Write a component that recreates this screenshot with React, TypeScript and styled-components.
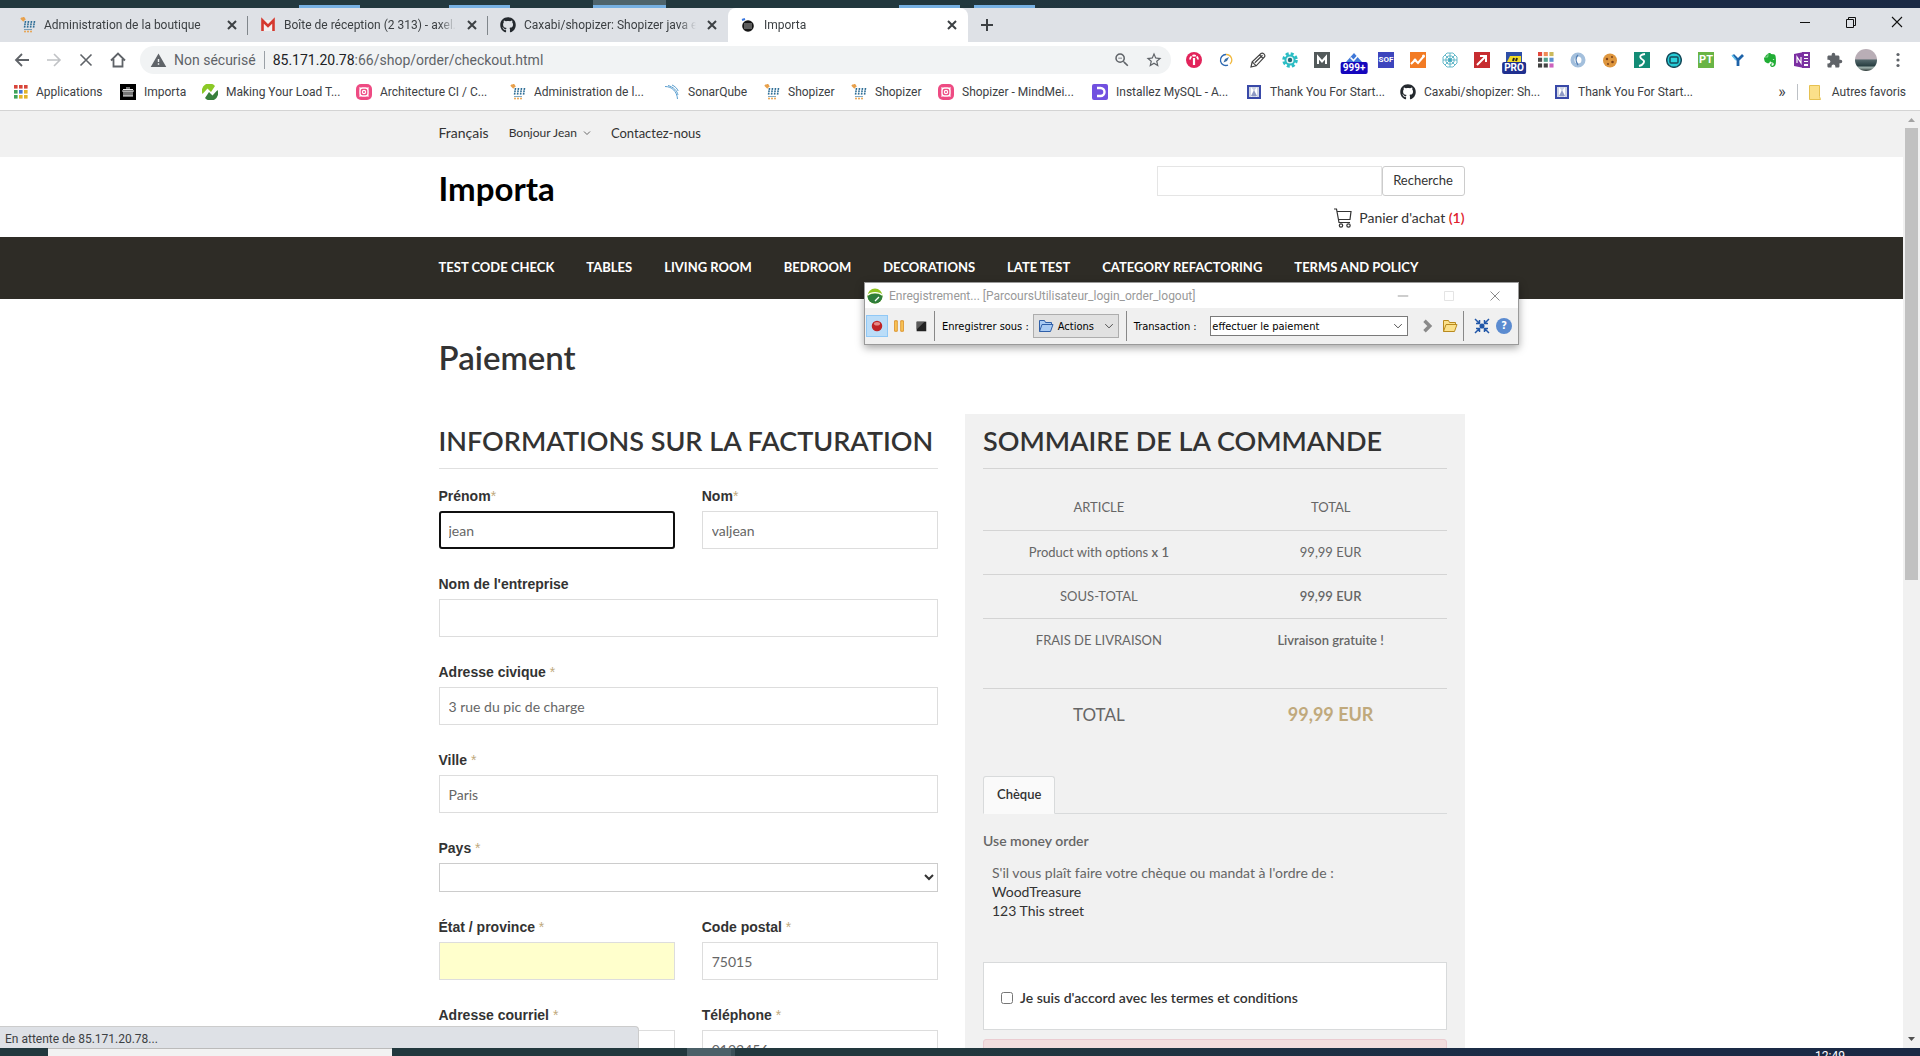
import React, { ReactNode } from 'react';
import styled, { createGlobalStyle, css } from 'styled-components';
import { FaGithub, FaEvernote } from 'react-icons/fa';
import { MdExtension, MdOutlineZoomOut, MdStarBorder, MdWarning } from 'react-icons/md';

const ui = 'Roboto, "Open Sans", sans-serif';
const lato = 'Lato, "Open Sans", sans-serif';

const GlobalStyle = createGlobalStyle`
  *, *::before, *::after { box-sizing: border-box; }
  body { margin: 0; background: #fff; }
  button, input, select { margin: 0; font: inherit; color: inherit; }
  button { padding: 0; border: 0; background: none; }
  a { color: inherit; text-decoration: none; }
  svg { display: block; flex: none; }
`;

const Screen = styled.div`
  display: flex;
  flex-direction: column;
  height: 100vh;
  overflow: hidden;
  font-family: ${ui};
  font-size: 12px;
  color: #3c4043;
`;

const Desktop = styled.div`
  display: flex;
  flex: none;
  height: 8px;
  overflow: hidden;
  background: linear-gradient(90deg, #22383e 0%, #22383e 50%, #1a2b47 80%, #1a2944 100%);
`;

const Task = styled.span<{ $space: number; $width: number; $lit?: boolean }>`
  flex: none;
  width: ${p => p.$width}px;
  margin-left: ${p => p.$space}px;
  border-bottom: 3px solid #76b0e2;
  background: ${p => (p.$lit ? '#4e646c' : 'transparent')};
`;

const TaskSearch = styled.span`
  width: 344px;
  margin-left: 48px;
  background: #f2f2f2;
  border-top: 1px solid #bbb;
`;

const TaskActive = styled.span`
  width: 48px;
  margin-left: 295px;
  background: #4b6068;
  border-right: 4px solid #3a5058;
`;

const Clock = styled.time`
  margin-left: auto;
  padding-right: 75px;
  font-size: 12px;
  line-height: 16px;
  color: #fff;
`;

/* Browser chrome */
const TabBar = styled.div`
  display: flex;
  flex: none;
  height: 34px;
  padding-left: 8px;
  background: #dee1e6;
`;

const Tab = styled.div<{ $active?: boolean; $line?: boolean }>`
  display: flex;
  align-items: center;
  gap: 8px;
  width: 240px;
  padding: 0 8px 0 12px;
  position: relative;
  border-radius: 8px 8px 0 0;
  background: ${p => (p.$active ? '#fff' : 'transparent')};
  ${p => p.$line && css`
    &::after {
      content: '';
      position: absolute;
      right: 0;
      top: 8px;
      height: 19px;
      border-right: 1px solid #80868b;
    }
  `}
`;

const TabTitle = styled.span`
  flex: 1;
  min-width: 0;
  overflow: hidden;
  white-space: nowrap;
  line-height: 20px;
  mask-image: linear-gradient(90deg, #000 90%, transparent);
`;

const IconButton = styled.button<{ $size?: number }>`
  display: grid;
  place-items: center;
  flex: none;
  width: ${p => p.$size ?? 16}px;
  height: ${p => p.$size ?? 16}px;
`;

const NewTab = styled(IconButton)`
  align-self: center;
  margin-left: 11px;
`;

const WindowButtons = styled.div`
  display: flex;
  gap: 30px;
  margin: 6px 15px 0 auto;
`;

const Toolbar = styled.div`
  display: flex;
  align-items: center;
  flex: none;
  height: 36px;
  padding: 0 14px;
  background: #fff;
`;

const NavButtons = styled.div`
  display: flex;
  gap: 16px;
  margin-right: 14px;
`;

const Omnibox = styled.div`
  display: flex;
  align-items: center;
  flex: 1;
  height: 28px;
  padding: 0 8px 0 10px;
  border-radius: 14px;
  background: #f1f3f4;
  font-size: 14px;
  color: #5f6368;
`;

const Security = styled.span`
  margin: 0 8px 0 7px;
  padding-right: 8px;
  border-right: 1px solid #9aa0a6;
  line-height: 18px;
`;

const Url = styled.span`
  flex: 1;
  b { font-weight: 400; color: #202124; }
`;

const OmniIcons = styled.div`
  display: flex;
  gap: 14px;
`;

const Extensions = styled.div`
  display: flex;
  align-items: center;
  gap: 16px;
  margin-left: 15px;
`;

const ExtButton = styled(IconButton)`
  position: relative;
`;

const Badge = styled.span<{ $bg: string }>`
  position: absolute;
  top: 10px;
  left: 50%;
  padding: 0 2px;
  border-radius: 2px;
  transform: translateX(-50%);
  background: ${p => p.$bg};
  color: #fff;
  font-size: 10px;
  font-weight: 700;
  line-height: 12px;
`;

const Glyph = styled.span<{ $bg: string; $fg?: string; $round?: boolean; $size?: number }>`
  display: grid;
  place-items: center;
  flex: none;
  width: 16px;
  height: 16px;
  border-radius: ${p => (p.$round ? 8 : 0)}px;
  background: ${p => p.$bg};
  color: ${p => p.$fg ?? '#fff'};
  font-size: ${p => p.$size ?? 9}px;
  font-weight: 700;
  line-height: 16px;
`;

const Avatar = styled.span`
  width: 22px;
  height: 22px;
  margin: 0 -3px;
  border-radius: 50%;
  background: linear-gradient(180deg, #b9aeb6 0 45%, #53676b 50%, #2b4144 75%, #9fb1ad 85%, #273331);
`;

const Bookmarks = styled.nav`
  display: flex;
  align-items: center;
  gap: 16px;
  flex: none;
  height: 33px;
  padding: 0 14px 4px;
  border-bottom: 1px solid #d4d4d4;
  background: #fff;
`;

const Bookmark = styled.a<{ $width: number }>`
  display: flex;
  align-items: center;
  gap: 8px;
  flex: none;
  width: ${p => p.$width}px;
  line-height: 16px;
  white-space: nowrap;
`;

const MoreBookmarks = styled.div`
  display: flex;
  align-items: center;
  gap: 11px;
  margin-left: auto;
  span:first-child { font-size: 16px; line-height: 16px; }
`;

const Divider = styled.span`
  width: 1px;
  height: 16px;
  background: #bdc1c6;
`;

/* Page */
const Viewport = styled.div`
  display: flex;
  flex: 1;
  min-height: 0;
  position: relative;
  overflow: hidden;
`;

const Page = styled.div`
  flex: 1;
  min-width: 0;
  overflow: hidden;
  background: #fff;
  font-family: ${lato};
  font-size: 14px;
  color: #333;
`;

const Scrollbar = styled.div`
  display: flex;
  flex-direction: column;
  align-items: center;
  flex: none;
  width: 17px;
  padding: 7px 2px;
  background: #f1f1f1;
`;

const Thumb = styled.div`
  flex: none;
  width: 100%;
  height: 49%;
  margin: 6px 0 auto;
  background: #c1c1c1;
`;

const Container = styled.div`
  width: 100%;
  max-width: 1026px;
  margin: 0 auto;
`;

const TopBar = styled.div`
  background: #f1f1f1;
`;

const TopLinks = styled(Container)`
  display: flex;
  align-items: center;
  gap: 20px;
  height: 46px;
  padding-bottom: 3px;
  font-size: 13px;
  a { display: flex; align-items: center; gap: 6px; }
  a:first-child { font-size: 14px; }
`;

const Small = styled.a`
  font-size: 12px;
`;

const Header = styled(Container)`
  display: flex;
  justify-content: space-between;
  height: 80px;
`;

const Logo = styled.a`
  padding-top: 11px;
  font-size: 33px;
  font-weight: 700;
  line-height: 40px;
  color: #000;
`;

const HeaderRight = styled.div`
  display: flex;
  flex-direction: column;
  align-items: flex-end;
  gap: 12px;
  padding-top: 9px;
`;

const Search = styled.form`
  display: flex;
  height: 30px;
`;

const SearchInput = styled.input`
  width: 225px;
  border: 1px solid #e5e5e5;
`;

const SearchButton = styled.button`
  width: 83px;
  padding-bottom: 2px;
  border: 1px solid #ccc;
  border-radius: 3px;
  background: #fff;
  font-size: 13px;
`;

const Cart = styled.a`
  display: flex;
  align-items: center;
  gap: 7px;
  font-size: 14px;
  line-height: 20px;
  b { font-weight: 600; color: #e0202a; }
`;

const MainNav = styled.nav`
  background: #2e2c26;
`;

const NavLinks = styled(Container)`
  display: flex;
  align-items: center;
  gap: 32px;
  height: 62px;
  padding-bottom: 2px;
  color: #fff;
  font-size: 13px;
  font-weight: 700;
  white-space: nowrap;
`;

const PageTitle = styled.h1`
  margin: 0;
  padding: 37px 0 36px;
  font-size: 33px;
  font-weight: 600;
  line-height: 42px;
`;

const Columns = styled.div`
  display: grid;
  grid-template-columns: 1fr 1fr;
  gap: 27px;
`;

const Billing = styled.form`
  display: grid;
  grid-template-columns: 1fr 1fr;
  column-gap: 27px;
  row-gap: 27px;
  align-content: start;
`;

const SectionTitle = styled.h2`
  grid-column: 1 / -1;
  margin: 0;
  padding: 11px 0;
  border-bottom: 1px solid #e0e0e0;
  font-size: 27px;
  font-weight: 600;
  line-height: 32px;
  white-space: nowrap;
`;

const BillingTitle = styled(SectionTitle)`
  margin-bottom: -8px;
`;

const FieldBox = styled.label<{ $wide?: boolean }>`
  display: flex;
  flex-direction: column;
  gap: 6px;
  grid-column: ${p => (p.$wide ? '1 / -1' : 'auto')};
  font-family: "Liberation Sans", Arial, sans-serif;
  font-size: 14px;
  font-weight: 700;
  line-height: 17px;
  i { font-style: normal; font-weight: 400; color: #c0a97c; }
`;

const TextInput = styled.input<{ $bg?: string }>`
  width: 100%;
  height: 38px;
  padding: 0 9px;
  border: 1px solid #ddd;
  outline: 0;
  background: ${p => p.$bg ?? '#fff'};
  font-family: ${lato};
  font-size: 14px;
  font-weight: 400;
  color: #666;
`;

const FocusedInput = styled(TextInput)`
  border: 2px solid #101010;
  border-radius: 3px;
  padding: 0 8px;
`;

const Country = styled.select`
  width: 100%;
  height: 29px;
  border: 1px solid #ccc;
  background: #fff;
`;

const Summary = styled.section`
  display: flow-root;
  padding: 0 18px 60px;
  background: #f1f1f1;
`;

const SummaryTitle = styled(SectionTitle)`
  border-color: #d4d4d4;
`;

const OrderTable = styled.table`
  width: 100%;
  margin-top: 15px;
  border-collapse: collapse;
  table-layout: fixed;
  font-size: 13px;
  color: #666;
  text-align: center;
  th, td { padding: 0; font-weight: 400; }
  b { font-weight: 600; }
  tr { height: 44px; }
  tr + tr, tbody tr, tfoot tr { border-top: 1px solid #d4d4d4; }
  thead tr { height: 46px; }
  tbody tr:last-child { height: 70px; }
  tbody tr:last-child td, tbody tr:last-child th { padding-bottom: 26px; }
  tfoot tr { height: 52px; font-size: 17px; }
  tfoot td { font-size: 18px; font-weight: 700; color: #c0a97c; }
`;

const PayTabs = styled.div`
  display: flex;
  margin-top: 36px;
  border-bottom: 1px solid #d8dadb;
`;

const PayTab = styled.button`
  height: 38px;
  margin-bottom: -1px;
  padding: 0 13px 2px;
  border: 1px solid #d8dadb;
  border-bottom-color: #fafafa;
  border-radius: 3px 3px 0 0;
  background: #fafafa;
  font-size: 13px;
  font-weight: 600;
  color: #333;
`;

const PayTitle = styled.h3`
  margin: 17px 0 12px;
  font-size: 14px;
  font-weight: 600;
  line-height: 20px;
  color: #666;
`;

const PayText = styled.p`
  margin: 0 0 42px;
  padding-left: 9px;
  line-height: 19px;
  color: #333;
  span { color: #666; }
`;

const Agreement = styled.label`
  display: flex;
  align-items: center;
  gap: 7px;
  height: 68px;
  margin-bottom: 9px;
  padding: 3px 17px 0;
  border: 1px solid #d8dadb;
  background: #fff;
  font-weight: 600;
  input { width: 12px; height: 12px; }
`;

const Alert = styled.div`
  height: 45px;
  border: 1px solid #ebccd1;
  border-radius: 3px;
  background: #f2dede;
`;

const Status = styled.div`
  position: absolute;
  left: 0;
  bottom: 0;
  width: 639px;
  padding: 3px 5px 0;
  border-top: 1px solid #ccc;
  border-right: 1px solid #ccc;
  border-radius: 0 4px 0 0;
  background: #dee1e6;
  line-height: 18px;
`;

/* Floating recorder window */
const Recorder = styled.section`
  position: absolute;
  top: 171px;
  left: 864px;
  width: 655px;
  border: 1px solid #9a9a9a;
  background: #f0f0f0;
  box-shadow: 0 3px 8px rgba(0, 0, 0, 0.35);
  font-size: 11px;
  color: #000;
`;

const RecorderTitle = styled.header`
  display: flex;
  align-items: center;
  gap: 6px;
  height: 25px;
  padding: 0 17px 0 2px;
  background: #fff;
  font-size: 12px;
  color: #999;
`;

const RecorderButtons = styled.div`
  display: flex;
  gap: 34px;
  margin-left: auto;
`;

const RecorderBar = styled.div`
  display: flex;
  align-items: center;
  height: 36px;
  padding: 0 3px 0 1px;
  font-family: "DejaVu Sans Condensed", "DejaVu Sans", sans-serif;
  font-size: 11px;
  white-space: nowrap;
`;

const RecButton = styled(IconButton)<{ $on?: boolean }>`
  width: 22px;
  height: 22px;
  border: 1px solid ${p => (p.$on ? '#90c8f6' : 'transparent')};
  background: ${p => (p.$on ? '#bbddf8' : 'transparent')};
`;

const RecLine = styled.span`
  width: 1px;
  height: 30px;
  margin: 0 7px 0 2px;
  background: #888;
`;

const RecLabel = styled.label`
  display: flex;
  align-items: center;
  gap: 4px;
  margin-right: 5px;
`;

const ActionsMenu = styled.button`
  display: flex;
  align-items: center;
  gap: 4px;
  width: 86px;
  height: 24px;
  padding: 0 4px;
  border: 1px solid #adadad;
  background: #e1e1e1;
  svg:last-child { margin-left: auto; }
`;

const Combo = styled.span`
  display: grid;
  align-items: center;
  width: 198px;
  margin: 0 auto;
  select {
    grid-area: 1 / 1;
    height: 20px;
    padding: 0 1px;
    border: 1px solid #7a7a7a;
    background: #fff;
    appearance: none;
  }
  svg { grid-area: 1 / 1; justify-self: end; margin-right: 5px; pointer-events: none; }
`;

/* Icons */
const Svg = ({ s = 16, c = 'none', w = 2, children }: { s?: number; c?: string; w?: number; children: ReactNode }) => (
  <svg width={s} height={s} viewBox="0 0 16 16" fill="none" stroke={c} strokeWidth={w}>{children}</svg>
);
const Close = ({ c = '#3c4043', w = 2, s = 16 }) => <Svg c={c} w={w} s={s}><path d="M4 4l8 8M12 4l-8 8" /></Svg>;
const Chevron = ({ c = '#444', s = 10, w = 2 }) => <Svg c={c} w={w} s={s}><path d="M2 5l6 6 6-6" /></Svg>;

const ShopizerIcon = () => (
  <Svg>
    <path d="M1 1l3 3M3 0l2 3" stroke="#e8a14c" />
    <path d="M5.500 4l-1 7M8.500 4l-1 7M11.500 4l-1 7M14.500 4l-1 7" stroke="#2f6f97" strokeWidth="1.600" strokeDasharray="1.800 .7" />
    <path d="M4 12.500h8" stroke="#2f6f97" strokeWidth=".6" />
    <circle cx="5" cy="14.500" r="1" fill="#e8a14c" /><circle cx="8" cy="14.500" r="1" fill="#e8a14c" /><circle cx="11" cy="14.500" r="1" fill="#e8a14c" />
  </Svg>
);
const GmailIcon = () => (
  <Svg><path d="M2 3h12v11H2z" fill="#f3f0f0" /><path d="M2.500 14V3.500L8 9l5.500-5.500V14" stroke="#d5392e" strokeWidth="2.600" /></Svg>
);
const ImportaTabIcon = () => (
  <Svg><circle cx="8" cy="9" r="5.800" fill="#151515" /><path d="M4 7h8M4 9h8M4 11h8" stroke="#c9c9c9" strokeWidth=".8" /><path d="M2 3l3-1" stroke="#3977e0" strokeWidth="2" /></Svg>
);
const ImportaIcon = () => (
  <Svg><path d="M0 0h16v16H0z" fill="#000" /><path d="M3 5.500h10M2 7h12M3 12h10M4 7v5M6 7v5M8 7v5M10 7v5M12 7v5M6 4h4" stroke="#eee" strokeWidth="1" /></Svg>
);
const AppsGrid = ({ size = 14, colors }: { size?: number; colors: string[] }) => (
  <svg width={size} height={size} viewBox="0 0 14 14">
    {colors.map((c, i) => <rect key={i} x={(i % 3) * 5} y={Math.floor(i / 3) * 5} width="3.600" height="3.600" fill={c} />)}
  </svg>
);
const NeoloadIcon = () => (
  <Svg><path d="M.5 10A7.500 7.500 0 0 1 13 2L9 8 5.500 4.500z" fill="#8bc926" /><path d="M15.500 6A7.500 7.500 0 0 1 3 14L7 8l3.500 3.500z" fill="#39803c" /></Svg>
);
const RecorderLogo = () => (
  <Svg><circle cx="8" cy="8" r="7.500" fill="#8fc31f" /><path d="M.5 8C4 4.500 12 4.500 15.500 8a7.500 7.500 0 0 1-15 0z" fill="#2f7d3b" /><path d="M.8 7C4 3.800 12 3.800 15.200 7M8 13l4-4" stroke="#fff" strokeWidth="1.300" /></Svg>
);
const MindIcon = () => (
  <Svg><rect width="16" height="16" rx="5" fill="#ee4b83" /><rect x="4" y="4" width="8" height="8" rx="2.500" stroke="#fff" strokeWidth="1.400" /><circle cx="8" cy="8" r="1.600" stroke="#fff" strokeWidth="1.200" /><path d="M3.500 3.500l1.500 1.500M12.500 3.500L11 5M3.500 12.500L5 11M12.500 12.500L11 11" stroke="#fff" strokeWidth="1.200" /></Svg>
);
const SonarIcon = () => (
  <Svg c="#5b9fd0" w={1}><path d="M1 2.500C8 2.500 13 7.500 13.500 15M4 1.500C9.500 3 13 6.500 14 11M8 1c3 1.300 5 3.300 6.200 6" /></Svg>
);
const MysqlIcon = () => (
  <Svg><rect width="16" height="16" rx="2" fill="#7150e0" /><path d="M5 4h3.500a4 4 0 0 1 0 8H5" stroke="#fff" strokeWidth="2.400" /></Svg>
);
const StartIcon = () => (
  <Svg><path d="M2 2h12v12H2z" fill="#cfd5e4" stroke="#3949a8" strokeWidth="2" /><path d="M5 3l3 4 3-4v10l-3-3-3 3z" fill="#fff" /><path d="M5 12l3-6 3 6z" fill="#8e99c4" /></Svg>
);
const Folder = ({ fill = '#fbe08a', line = '#e6c151' }) => (
  <svg width="12" height="16" viewBox="0 0 12 16"><path d="M.5 1.500h10v11l1 3H.5z" fill={fill} stroke={line} /></svg>
);
const OpenFolder = ({ c, l }: { c: string; l: string }) => (
  <Svg c={l} w={1}><path d="M1.500 13.500v-11h5l1 2h6v3" fill={c} /><path d="M1.500 13.500l2.500-7h11l-2.500 7z" fill={c} /></Svg>
);
const CartIcon = () => (
  <svg width="18" height="20" viewBox="0 0 18 20" fill="none" stroke="#333" strokeWidth="1.200">
    <path d="M0 1h2.500L5 14.500h11M3 3.500h14l-1 8H4.500" /><circle cx="7" cy="17.500" r="1.700" /><circle cx="14.500" cy="17.500" r="1.700" />
  </svg>
);

const extensions: { name: string; icon: ReactNode }[] = [
  { name: 'Toucan', icon: <Svg><circle cx="8" cy="8" r="8" fill="#e2245b" /><path d="M8 13V6" stroke="#fff" strokeWidth="2.200" /><path d="M4 7.500a4 4 0 0 1 8 0" stroke="#fff" strokeWidth="1.800" strokeDasharray="3.500 1" /></Svg> },
  { name: 'Compass', icon: <Svg><path d="M8 2.500a5.500 5.500 0 1 0 2 10.600" stroke="#2c68b1" strokeWidth="1.300" /><path d="M8 2.500a5.500 5.500 0 0 1 4 9.500" stroke="#f1b93e" strokeWidth="1.300" /><path d="M5.500 10.500L7 7l4-2-2 4z" fill="#3a6ea5" /></Svg> },
  { name: 'Crayon', icon: <Svg c="#444" w={1.2}><path d="M1 15l1.200-5.200L11 1.500c1.800-1.500 4.800 1.500 3.500 3.500L6.200 13.800zM2.200 9.800l4 4M4.800 10.800l7.700-7.600M9.500 2.800L13 6.500" /></Svg> },
  { name: 'React', icon: <Svg><circle cx="8" cy="8" r="6.300" stroke="#2bbdc4" strokeWidth="3" strokeDasharray="2.900 2.040" /><circle cx="8" cy="8" r="4.600" stroke="#2bbdc4" strokeWidth="2" fill="#e8f8f8" /><circle cx="8" cy="8" r="2.200" fill="#256a78" /></Svg> },
  { name: 'Mercury', icon: <Svg><path d="M0 0h16v16H0z" fill="#535a5b" /><path d="M4 12V5l4 4.500L12 5v7" stroke="#fff" strokeWidth="2" /></Svg> },
  { name: 'Tâches', icon: <><Svg><path d="M0 10l8-9 8 9z" fill="#3f78d8" /><path d="M4.500 5.500l3 3 5-5.500" stroke="#fff" strokeWidth="1.600" /></Svg><Badge $bg="#1506bd">999+</Badge></> },
  { name: 'SOF', icon: <Glyph $bg="#3d45bd" $size={8}>SOF</Glyph> },
  { name: 'Analytics', icon: <Svg><path d="M0 0h16v16H0z" fill="#f27b24" /><path d="M1 12l4-4 3 3 6-7" stroke="#fff" strokeWidth="2" /><circle cx="5" cy="8" r="1.500" fill="#fff" /><circle cx="13.500" cy="4" r="1.500" fill="#fff" /></Svg> },
  { name: 'Réseau', icon: <Svg c="#42a8bd" w={0.8}><path d="M5 1h6l4 4v6l-4 4H5l-4-4V5zM6 4h4l2 2v4l-2 2H6l-2-2V6zM1 8h14M8 1v14M3 3l10 10M13 3L3 13" /><circle cx="8" cy="8" r="1.500" fill="#42a8bd" /></Svg> },
  { name: 'Flèche', icon: <Svg><path d="M0 0h16v16H0z" fill="#c62c30" /><path d="M3 13l9-9M6 4h6v6" stroke="#fff" strokeWidth="2" /></Svg> },
  { name: 'Pro', icon: <><Svg><path d="M0 0h16v14H0z" fill="#2e4fa7" /><path d="M1 10l3-6h11v6z" fill="#f2dc25" /><path d="M7 9l1-3M10 9l1-3" stroke="#222" /></Svg><Badge $bg="#20308f">PRO</Badge></> },
  { name: 'Grille', icon: <AppsGrid size={16} colors={['#e2483d', '#f08a55', '#cbb95c', '#4d4d4d', '#53a08a', '#5d91cf', '#3f3f3f', '#444', '#cc62bd']} /> },
  { name: 'Anneau', icon: <Svg><circle cx="8" cy="8" r="5.500" stroke="#a3bfdc" strokeWidth="4" /><path d="M8 3c-3 3-2 7 0 10" stroke="#5682b6" strokeWidth="1.400" /></Svg> },
  { name: 'Cookie', icon: <Svg><circle cx="8" cy="8.500" r="7" fill="#de963e" /><g fill="#7d431a"><circle cx="5" cy="7" r="1.200" /><circle cx="10" cy="5" r="1" /><circle cx="10.500" cy="10" r="1.300" /><circle cx="6" cy="12" r="1" /></g></Svg> },
  { name: 'Stylus', icon: <Svg><path d="M0 0h16v16H0z" fill="#138c76" /><path d="M11 2C3 3 7 7 9 8s1 5-4 6" stroke="#fff" strokeWidth="1.800" /></Svg> },
  { name: 'Écran', icon: <Svg><circle cx="8" cy="8" r="7.300" fill="#26cbd5" stroke="#164b5b" strokeWidth="1.500" /><rect x="4" y="5" width="8" height="6" rx="1" fill="#2cd3dc" stroke="#164b5b" strokeWidth="1.500" /></Svg> },
  { name: 'PT', icon: <Glyph $bg="#69b445" $size={11}>PT</Glyph> },
  { name: 'Y', icon: <Svg><path d="M3 3l5 5 5-5M8 8v6" stroke="#1d62a8" strokeWidth="2.800" /><path d="M2 3l4 5" stroke="#67c5ef" strokeWidth="1.500" /></Svg> },
  { name: 'Evernote', icon: <FaEvernote size={16} color="#21ad35" /> },
  { name: 'OneNote', icon: <Svg><path d="M9 1h6v14H9z" fill="#fff" stroke="#7b36a0" /><path d="M10 5h5M10 8h5M10 11h5" stroke="#7b36a0" /><path d="M0 2l10-2v16L0 14z" fill="#7b2fa2" /><path d="M3 11V5l4 6V5" stroke="#fff" strokeWidth="1.200" /></Svg> },
  { name: 'Extensions', icon: <MdExtension size={17} color="#5f6368" /> },
];

const bookmarks: { label: string; width: number; icon: ReactNode }[] = [
  { label: 'Applications', width: 90, icon: <AppsGrid colors={['#d8453a', '#d8453a', '#d8453a', '#3fa35a', '#4775d1', '#e2b429', '#3fa35a', '#e2b429', '#e2b429']} /> },
  { label: 'Importa', width: 66, icon: <ImportaIcon /> },
  { label: 'Making Your Load T...', width: 138, icon: <NeoloadIcon /> },
  { label: 'Architecture CI / C...', width: 138, icon: <MindIcon /> },
  { label: 'Administration de l...', width: 138, icon: <ShopizerIcon /> },
  { label: 'SonarQube', width: 84, icon: <SonarIcon /> },
  { label: 'Shopizer', width: 71, icon: <ShopizerIcon /> },
  { label: 'Shopizer', width: 71, icon: <ShopizerIcon /> },
  { label: 'Shopizer - MindMei...', width: 138, icon: <MindIcon /> },
  { label: 'Installez MySQL - A...', width: 138, icon: <MysqlIcon /> },
  { label: 'Thank You For Start...', width: 138, icon: <StartIcon /> },
  { label: 'Caxabi/shopizer: Sh...', width: 138, icon: <FaGithub size={16} color="#24292e" /> },
  { label: 'Thank You For Start...', width: 138, icon: <StartIcon /> },
];

const tabs: { title: string; icon: ReactNode; active?: boolean; line?: boolean }[] = [
  { title: 'Administration de la boutique', icon: <ShopizerIcon />, line: true },
  { title: 'Boîte de réception (2 313) - axel.m', icon: <GmailIcon />, line: true },
  { title: 'Caxabi/shopizer: Shopizer java e-', icon: <FaGithub size={16} color="#24292e" /> },
  { title: 'Importa', icon: <ImportaTabIcon />, active: true },
];

const categories = ['TEST CODE CHECK', 'TABLES', 'LIVING ROOM', 'BEDROOM', 'DECORATIONS', 'LATE TEST', 'CATEGORY REFACTORING', 'TERMS AND POLICY'];

function Field({ label, required, wide, children }: { label: string; required?: string; wide?: boolean; children: ReactNode }) {
  return (
    <FieldBox $wide={wide}>
      <span>{label}{required && <i>{required}</i>}</span>
      {children}
    </FieldBox>
  );
}

function BrowserChrome() {
  return (
    <>
      <TabBar>
        {tabs.map(t => (
          <Tab key={t.title} $active={t.active} $line={t.line}>
            {t.icon}
            <TabTitle>{t.title}</TabTitle>
            <IconButton aria-label="Fermer l'onglet"><Close /></IconButton>
          </Tab>
        ))}
        <NewTab aria-label="Nouvel onglet"><Svg c="#3c4043"><path d="M8 2v12M2 8h12" /></Svg></NewTab>
        <WindowButtons>
          <IconButton aria-label="Réduire"><Svg c="#111" w={1}><path d="M3 8.500h10" /></Svg></IconButton>
          <IconButton aria-label="Restaurer"><Svg c="#111" w={1}><path d="M3.500 5.500h7v8h-7zM5.500 5V3.500h7v8H11" /></Svg></IconButton>
          <IconButton aria-label="Fermer"><Svg c="#111" w={1.1}><path d="M3 3l10 10M13 3L3 13" /></Svg></IconButton>
        </WindowButtons>
      </TabBar>
      <Toolbar>
        <NavButtons>
          <IconButton aria-label="Précédent"><Svg c="#5f6368" w={1.8}><path d="M15 8H2M8 2L2 8l6 6" /></Svg></IconButton>
          <IconButton aria-label="Suivant"><Svg c="#c0c2c5" w={1.6}><path d="M1 8h13M8 2l6 6-6 6" /></Svg></IconButton>
          <IconButton aria-label="Arrêter"><Svg c="#5f6368" w={1.6}><path d="M2.500 2.500l11 11M13.500 2.500l-11 11" /></Svg></IconButton>
          <IconButton aria-label="Accueil"><Svg c="#5f6368" w={1.8}><path d="M1 8.500L8 1.500l7 7M3.500 7v7.500h9V7" /></Svg></IconButton>
        </NavButtons>
        <Omnibox>
          <MdWarning size={17} color="#5f6368" />
          <Security>Non sécurisé</Security>
          <Url><b>85.171.20.78</b>:66/shop/order/checkout.html</Url>
          <OmniIcons>
            <IconButton $size={18} aria-label="Zoom"><MdOutlineZoomOut size={18} /></IconButton>
            <IconButton $size={18} aria-label="Favori"><MdStarBorder size={18} /></IconButton>
          </OmniIcons>
        </Omnibox>
        <Extensions>
          {extensions.map(e => <ExtButton key={e.name} aria-label={e.name}>{e.icon}</ExtButton>)}
          <Avatar />
          <IconButton aria-label="Menu"><Svg><g fill="#5f6368"><circle cx="8" cy="2.500" r="1.600" /><circle cx="8" cy="8" r="1.600" /><circle cx="8" cy="13.500" r="1.600" /></g></Svg></IconButton>
        </Extensions>
      </Toolbar>
      <Bookmarks>
        {bookmarks.map((b, i) => <Bookmark key={i} href="#" $width={b.width}>{b.icon}{b.label}</Bookmark>)}
        <MoreBookmarks>
          <span>»</span>
          <Divider />
          <Folder />
          <a href="#">Autres favoris</a>
        </MoreBookmarks>
      </Bookmarks>
    </>
  );
}

function RecorderWindow() {
  return (
    <Recorder>
      <RecorderTitle>
        <RecorderLogo />
        <span>Enregistrement... [ParcoursUtilisateur_login_order_logout]</span>
        <RecorderButtons>
          <IconButton $size={12} aria-label="Réduire"><Svg s={12} c="#999" w={1.3}><path d="M1 8h14" /></Svg></IconButton>
          <IconButton $size={12} aria-label="Agrandir"><Svg s={12} c="#e3e3e3" w={1.3}><path d="M2 2h12v12H2z" /></Svg></IconButton>
          <IconButton $size={12} aria-label="Fermer"><Svg s={12} c="#888" w={1.3}><path d="M2 2l12 12M14 2L2 14" /></Svg></IconButton>
        </RecorderButtons>
      </RecorderTitle>
      <RecorderBar>
        <RecButton $on aria-label="Enregistrer"><Svg s={14}><circle cx="8" cy="8" r="6" fill="#bf2426" /><ellipse cx="8" cy="5.500" rx="3.500" ry="2" fill="#e68b87" /></Svg></RecButton>
        <RecButton aria-label="Pause"><Svg s={14} c="#d98a1c" w={1}><path d="M3 2h3v12H3zM10 2h3v12h-3z" fill="#fbc95d" /></Svg></RecButton>
        <RecButton aria-label="Arrêter"><Svg s={14}><path d="M3 3h11v11H3z" fill="#222" /><path d="M3 3h9L3 12z" fill="#5b5b5b" /></Svg></RecButton>
        <RecLine />
        <RecLabel as="span">Enregistrer sous :
          <ActionsMenu><OpenFolder c="#a9cbf3" l="#2f5fa8" />Actions<Chevron s={10} w={1.5} /></ActionsMenu>
        </RecLabel>
        <RecLine />
        <RecLabel htmlFor="transaction">Transaction :</RecLabel>
        <Combo>
          <select id="transaction"><option>effectuer le paiement</option></select>
          <Chevron s={10} w={1.5} />
        </Combo>
        <RecButton aria-label="Suivant"><Svg s={14} c="#8a8a8a" w={4}><path d="M4 2l6 6-6 6" /></Svg></RecButton>
        <RecButton aria-label="Ouvrir"><OpenFolder c="#fbe18b" l="#b98a1e" /></RecButton>
        <RecLine />
        <RecButton aria-label="Compacter"><Svg c="#2257a8" w={1.5}><path d="M1 1l4 4M15 1l-4 4M1 15l4-4M15 15l-4-4M2 5.500h3.500V2M14 5.500h-3.500V2M2 10.500h3.500V14M14 10.500h-3.500V14" /><circle cx="8" cy="8" r="1.800" fill="#2257a8" /></Svg></RecButton>
        <RecButton aria-label="Aide"><Glyph $bg="#5b8bd0" $round $size={11}>?</Glyph></RecButton>
      </RecorderBar>
    </Recorder>
  );
}

export default function App() {
  return (
    <Screen>
      <GlobalStyle />
      <Desktop>
        <Task $space={299} $width={61} />
        <Task $space={89} $width={61} />
        <Task $space={83} $width={73} $lit />
        <Task $space={233} $width={61} />
        <Task $space={14} $width={61} />
      </Desktop>
      <BrowserChrome />
      <Viewport>
        <Page>
          <TopBar>
            <TopLinks>
              <a href="#">Français</a>
              <Small href="#">Bonjour Jean <Chevron s={8} w={1.6} /></Small>
              <a href="#">Contactez-nous</a>
            </TopLinks>
          </TopBar>
          <Header>
            <Logo href="#">Importa</Logo>
            <HeaderRight>
              <Search>
                <SearchInput aria-label="Recherche" />
                <SearchButton type="button">Recherche</SearchButton>
              </Search>
              <Cart href="#"><CartIcon /><span>Panier d'achat <b>(1)</b></span></Cart>
            </HeaderRight>
          </Header>
          <MainNav>
            <NavLinks>{categories.map(c => <a key={c} href="#">{c}</a>)}</NavLinks>
          </MainNav>
          <Container>
            <PageTitle>Paiement</PageTitle>
            <Columns>
              <Billing>
                <BillingTitle>INFORMATIONS SUR LA FACTURATION</BillingTitle>
                <Field label="Prénom" required="*"><FocusedInput defaultValue="jean" /></Field>
                <Field label="Nom" required="*"><TextInput defaultValue="valjean" /></Field>
                <Field label="Nom de l'entreprise" wide><TextInput /></Field>
                <Field label="Adresse civique" required=" *" wide><TextInput defaultValue="3 rue du pic de charge" /></Field>
                <Field label="Ville" required=" *" wide><TextInput defaultValue="Paris" /></Field>
                <Field label="Pays" required=" *" wide><Country><option /></Country></Field>
                <Field label="État / province" required=" *"><TextInput $bg="#ffffcc" /></Field>
                <Field label="Code postal" required=" *"><TextInput defaultValue="75015" /></Field>
                <Field label="Adresse courriel" required=" *"><TextInput /></Field>
                <Field label="Téléphone" required=" *"><TextInput defaultValue="0123456" /></Field>
              </Billing>
              <Summary>
                <SummaryTitle>SOMMAIRE DE LA COMMANDE</SummaryTitle>
                <OrderTable>
                  <thead><tr><th>ARTICLE</th><th>TOTAL</th></tr></thead>
                  <tbody>
                    <tr><td>Product with options <b>x 1</b></td><td>99,99 EUR</td></tr>
                    <tr><th>SOUS-TOTAL</th><td><b>99,99 EUR</b></td></tr>
                    <tr><th>FRAIS DE LIVRAISON</th><td><b>Livraison gratuite !</b></td></tr>
                  </tbody>
                  <tfoot><tr><th>TOTAL</th><td>99,99 EUR</td></tr></tfoot>
                </OrderTable>
                <PayTabs><PayTab>Chèque</PayTab></PayTabs>
                <PayTitle>Use money order</PayTitle>
                <PayText><span>S'il vous plaît faire votre chèque ou mandat à l'ordre de :</span><br />WoodTreasure<br />123 This street</PayText>
                <Agreement><input type="checkbox" />Je suis d'accord avec les termes et conditions</Agreement>
                <Alert />
              </Summary>
            </Columns>
          </Container>
        </Page>
        <Scrollbar>
          <svg width="7" height="4" viewBox="0 0 7 4"><path d="M0 4l3.500-4L7 4z" fill="#a3a3a3" /></svg>
          <Thumb />
          <svg width="7" height="4" viewBox="0 0 7 4"><path d="M0 0l3.500 4L7 0z" fill="#505050" /></svg>
        </Scrollbar>
        <Status>En attente de 85.171.20.78...</Status>
        <RecorderWindow />
      </Viewport>
      <Desktop>
        <TaskSearch />
        <TaskActive />
        <Clock>12:49</Clock>
      </Desktop>
    </Screen>
  );
}
